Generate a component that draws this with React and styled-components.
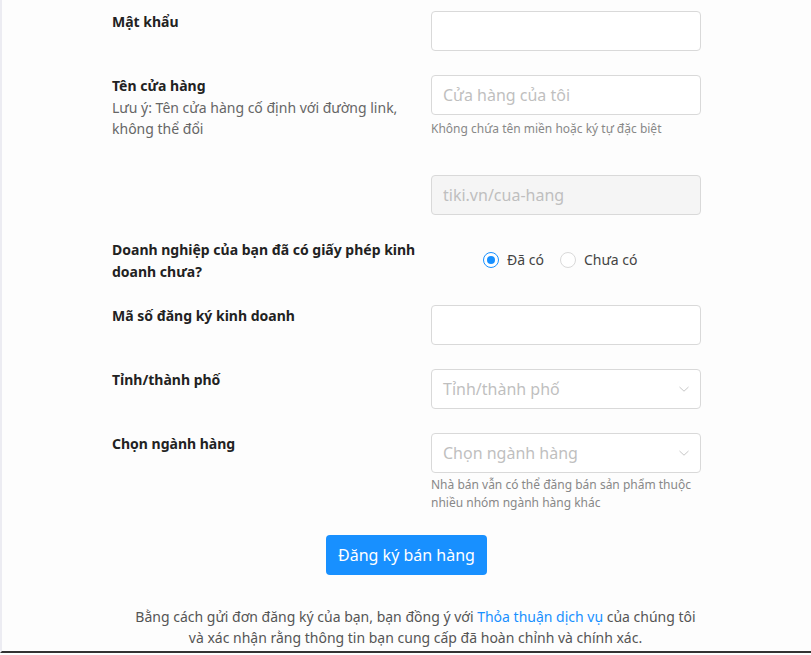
import React, { useState } from "react";
import styled, { createGlobalStyle } from "styled-components";

const GlobalStyle = createGlobalStyle`
  html, body {
    margin: 0;
    padding: 0;
    background: #fdfdfd;
  }
  body {
    font-family: "Noto Sans", "Open Sans", sans-serif;
    font-size: 14px;
    color: rgba(0, 0, 0, 0.85);
  }
`;

function Chevron() {
  return (
    <svg width="12" height="8" viewBox="0 0 12 8" fill="none">
      <path d="M1.5 2L6 6.2L10.5 2" stroke="#c8c8c8" strokeWidth="1" />
    </svg>
  );
}

export default function App() {
  const [licensed, setLicensed] = useState(true);

  return (
    <>
      <GlobalStyle />
      <Page>
        <Form>
          <Row $gap={24}>
            <Label>Mật khẩu</Label>
            <Control>
              <Input type="password" />
            </Control>
          </Row>

          <Row $gap={36}>
            <Label>
              Tên cửa hàng
              <Note>Lưu ý: Tên cửa hàng cố định với đường link, không thể đổi</Note>
            </Label>
            <Control>
              <Input placeholder="Cửa hàng của tôi" />
              <Help>Không chứa tên miền hoặc ký tự đặc biệt</Help>
            </Control>
          </Row>

          <Row $gap={24}>
            <Label />
            <Control>
              <Input disabled placeholder="tiki.vn/cua-hang" />
            </Control>
          </Row>

          <Row $gap={22} $center>
            <Label>Doanh nghiệp của bạn đã có giấy phép kinh doanh chưa?</Label>
            <Control>
              <RadioGroup>
                <RadioOption onClick={() => setLicensed(true)}>
                  <RadioDot $checked={licensed} />
                  Đã có
                </RadioOption>
                <RadioOption onClick={() => setLicensed(false)}>
                  <RadioDot $checked={!licensed} />
                  Chưa có
                </RadioOption>
              </RadioGroup>
            </Control>
          </Row>

          <Row $gap={24}>
            <Label>Mã số đăng ký kinh doanh</Label>
            <Control>
              <Input />
            </Control>
          </Row>

          <Row $gap={24}>
            <Label>Tỉnh/thành phố</Label>
            <Control>
              <Select>
                <span>Tỉnh/thành phố</span>
                <Chevron />
              </Select>
            </Control>
          </Row>

          <Row $gap={23}>
            <Label>Chọn ngành hàng</Label>
            <Control>
              <Select>
                <span>Chọn ngành hàng</span>
                <Chevron />
              </Select>
              <Help $tall>
                Nhà bán vẫn có thể đăng bán sản phẩm thuộc nhiều nhóm ngành hàng khác
              </Help>
            </Control>
          </Row>
        </Form>

        <SubmitButton>Đăng ký bán hàng</SubmitButton>

        <Terms>
          Bằng cách gửi đơn đăng ký của bạn, bạn đồng ý với{" "}
          <a href="#terms">Thỏa thuận dịch vụ</a> của chúng tôi
          <br />
          và xác nhận rằng thông tin bạn cung cấp đã hoàn chỉnh và chính xác.
        </Terms>
      </Page>
    </>
  );
}

const Page = styled.div`
  min-height: 653px;
  box-sizing: border-box;
  border-left: 2px solid #ececf2;
  border-bottom: 2px solid #333;
  background: #fdfdfd;
  padding-top: 11px;
  display: flex;
  flex-direction: column;
  align-items: center;
`;

const Form = styled.div`
  align-self: flex-start;
  margin-left: 110px;
  display: flex;
  flex-direction: column;
`;

const Row = styled.div`
  display: grid;
  grid-template-columns: 312px 270px;
  column-gap: 7px;
  align-items: ${(p) => (p.$center ? "center" : "start")};
  margin-bottom: ${(p) => p.$gap}px;
`;

const Label = styled.div`
  font-weight: 700;
  line-height: 22px;
  color: #222;
`;

const Note = styled.div`
  font-weight: 400;
  color: #666;
  line-height: 21px;
  max-width: 300px;
`;

const Control = styled.div`
  display: flex;
  flex-direction: column;
`;

const Input = styled.input`
  box-sizing: border-box;
  width: 100%;
  height: 40px;
  padding: 0 11px;
  border: 1px solid #d9d9d9;
  border-radius: 4px;
  background: #fff;
  font-family: inherit;
  font-size: 16px;
  color: #333;
  outline: none;

  &::placeholder {
    color: #bfbfbf;
  }

  &:disabled {
    background: #f5f5f5;
  }
`;

const Select = styled.div`
  box-sizing: border-box;
  height: 40px;
  padding: 0 10px 0 11px;
  border: 1px solid #d9d9d9;
  border-radius: 4px;
  background: #fff;
  display: flex;
  align-items: center;
  justify-content: space-between;
  font-size: 16px;
  color: #bfbfbf;
`;

const Help = styled.div`
  font-size: 12px;
  line-height: 18px;
  color: #888;
  padding-top: ${(p) => (p.$tall ? "3px" : "5px")};
`;

const RadioGroup = styled.div`
  display: flex;
  gap: 16px;
  padding-left: 52px;
  margin-top: -3px;
`;

const RadioOption = styled.label`
  display: flex;
  align-items: center;
  gap: 8px;
  font-size: 14px;
  color: #444;
  cursor: pointer;
`;

const RadioDot = styled.span`
  box-sizing: border-box;
  width: 16px;
  height: 16px;
  border-radius: 50%;
  border: 1px solid ${(p) => (p.$checked ? "#1890ff" : "#d9d9d9")};
  background: #fff;
  display: flex;
  align-items: center;
  justify-content: center;

  &::after {
    content: "";
    width: 8px;
    height: 8px;
    border-radius: 50%;
    background: #1890ff;
    display: ${(p) => (p.$checked ? "block" : "none")};
  }
`;

const SubmitButton = styled.button`
  width: 161px;
  height: 40px;
  border: none;
  border-radius: 4px;
  background: #1890ff;
  color: #fff;
  font-family: inherit;
  font-size: 16px;
  cursor: pointer;
`;

const Terms = styled.p`
  margin: 31px 0 0;
  padding-left: 18px;
  text-align: center;
  line-height: 21px;
  color: #555;

  a {
    color: #1890ff;
    text-decoration: none;
  }
`;
